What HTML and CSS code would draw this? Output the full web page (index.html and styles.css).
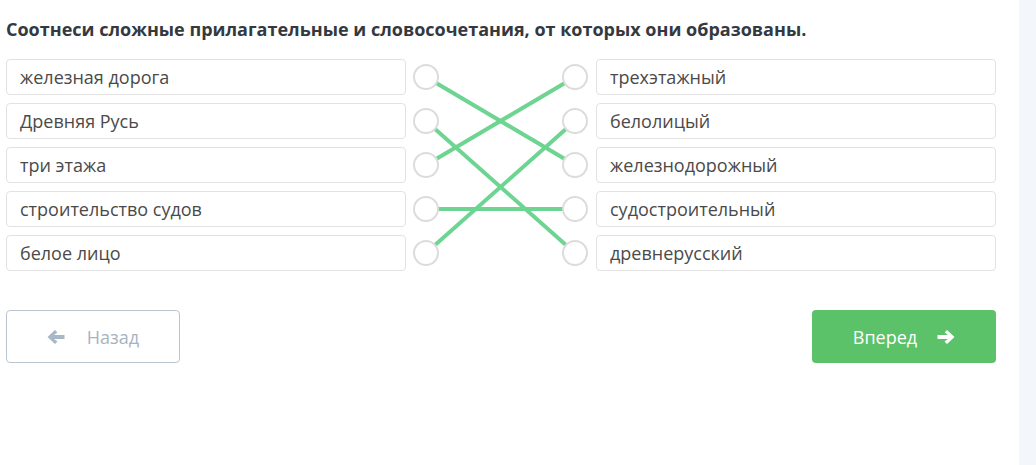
FILE: index.html
```html
<!DOCTYPE html>
<html lang="ru">
<head>
<meta charset="utf-8">
<link rel="stylesheet" href="styles.css">
</head>
<body>
<div class="page">
  <main class="main">
    <h1 class="title">Соотнеси сложные прилагательные и словосочетания, от которых они образованы.</h1>
    <div class="match">
      <div class="col">
        <div class="item">железная дорога</div>
        <div class="item">Древняя Русь</div>
        <div class="item">три этажа</div>
        <div class="item">строительство судов</div>
        <div class="item">белое лицо</div>
      </div>
      <svg class="links" width="190" height="212" viewBox="0 0 190 212">
        <g stroke="#6dd491" stroke-width="4" stroke-linecap="butt">
          <line x1="20" y1="18" x2="169" y2="106"/>
          <line x1="20" y1="106" x2="169" y2="18"/>
          <line x1="20" y1="62" x2="169" y2="194"/>
          <line x1="20" y1="194" x2="169" y2="62"/>
          <line x1="20" y1="150" x2="169" y2="150"/>
        </g>
        <g fill="#fff" stroke="#dcdcdc" stroke-width="2">
          <circle cx="20" cy="18" r="12"/>
          <circle cx="20" cy="62" r="12"/>
          <circle cx="20" cy="106" r="12"/>
          <circle cx="20" cy="150" r="12"/>
          <circle cx="20" cy="194" r="12"/>
          <circle cx="169" cy="18" r="12"/>
          <circle cx="169" cy="62" r="12"/>
          <circle cx="169" cy="106" r="12"/>
          <circle cx="169" cy="150" r="12"/>
          <circle cx="169" cy="194" r="12"/>
        </g>
      </svg>
      <div class="col">
        <div class="item">трехэтажный</div>
        <div class="item">белолицый</div>
        <div class="item">железнодорожный</div>
        <div class="item">судостроительный</div>
        <div class="item">древнерусский</div>
      </div>
    </div>
    <div class="nav">
      <button class="btn btn-back">
        <svg class="arrow" width="18" height="16" viewBox="0 0 18 16"><path d="M0.5 8 L8 1 L10.5 3.5 L7 6 L17.5 6 L17.5 10 L7 10 L10.5 12.5 L8 15 Z" fill="#a9b8c6"/></svg>
        <span>Назад</span>
      </button>
      <button class="btn btn-next">
        <span>Вперед</span>
        <svg class="arrow" width="18" height="16" viewBox="0 0 18 16"><path d="M17.5 8 L10 1 L7.5 3.5 L11 6 L0.5 6 L0.5 10 L11 10 L7.5 12.5 L10 15 Z" fill="#fff"/></svg>
      </button>
    </div>
  </main>
  <aside class="side"></aside>
</div>
</body>
</html>
```

FILE: styles.css
```css
html, body {
  margin: 0;
  padding: 0;
  background: #fff;
}
body {
  font-family: "Open Sans", "Liberation Sans", sans-serif;
  color: #444;
}
.page {
  display: flex;
  height: 465px;
}
.main {
  width: 1013px;
  padding: 0 0 0 6px;
}
.side {
  flex: 1;
  background: #f3f6fa;
}
.title {
  margin: 0;
  padding-top: 16px;
  font-size: 18px;
  font-weight: 700;
  line-height: 26px;
  color: #33393f;
}
.match {
  display: flex;
  margin-top: 17px;
}
.col {
  width: 400px;
  display: flex;
  flex-direction: column;
  gap: 8px;
}
.item {
  box-sizing: border-box;
  height: 36px;
  border: 1px solid #e2e2e2;
  border-radius: 4px;
  padding: 0 13px;
  font-size: 18px;
  line-height: 35px;
  color: #4a4a4a;
}
.links {
  display: block;
  width: 190px;
  height: 212px;
}
.nav {
  display: flex;
  justify-content: space-between;
  width: 990px;
  margin-top: 39px;
}
.btn {
  box-sizing: border-box;
  height: 53px;
  border-radius: 4px;
  font-family: "Open Sans", "Liberation Sans", sans-serif;
  font-size: 18px;
  display: flex;
  align-items: center;
  justify-content: center;
  padding: 0;
}
.btn-back {
  width: 174px;
  background: #fff;
  border: 1px solid #b9c6d1;
  color: #a6b4c2;
  gap: 22px;
}
.btn-next {
  width: 184px;
  background: #5bc26a;
  border: none;
  color: #fff;
  gap: 20px;
}
.arrow {
  display: block;
}
```
